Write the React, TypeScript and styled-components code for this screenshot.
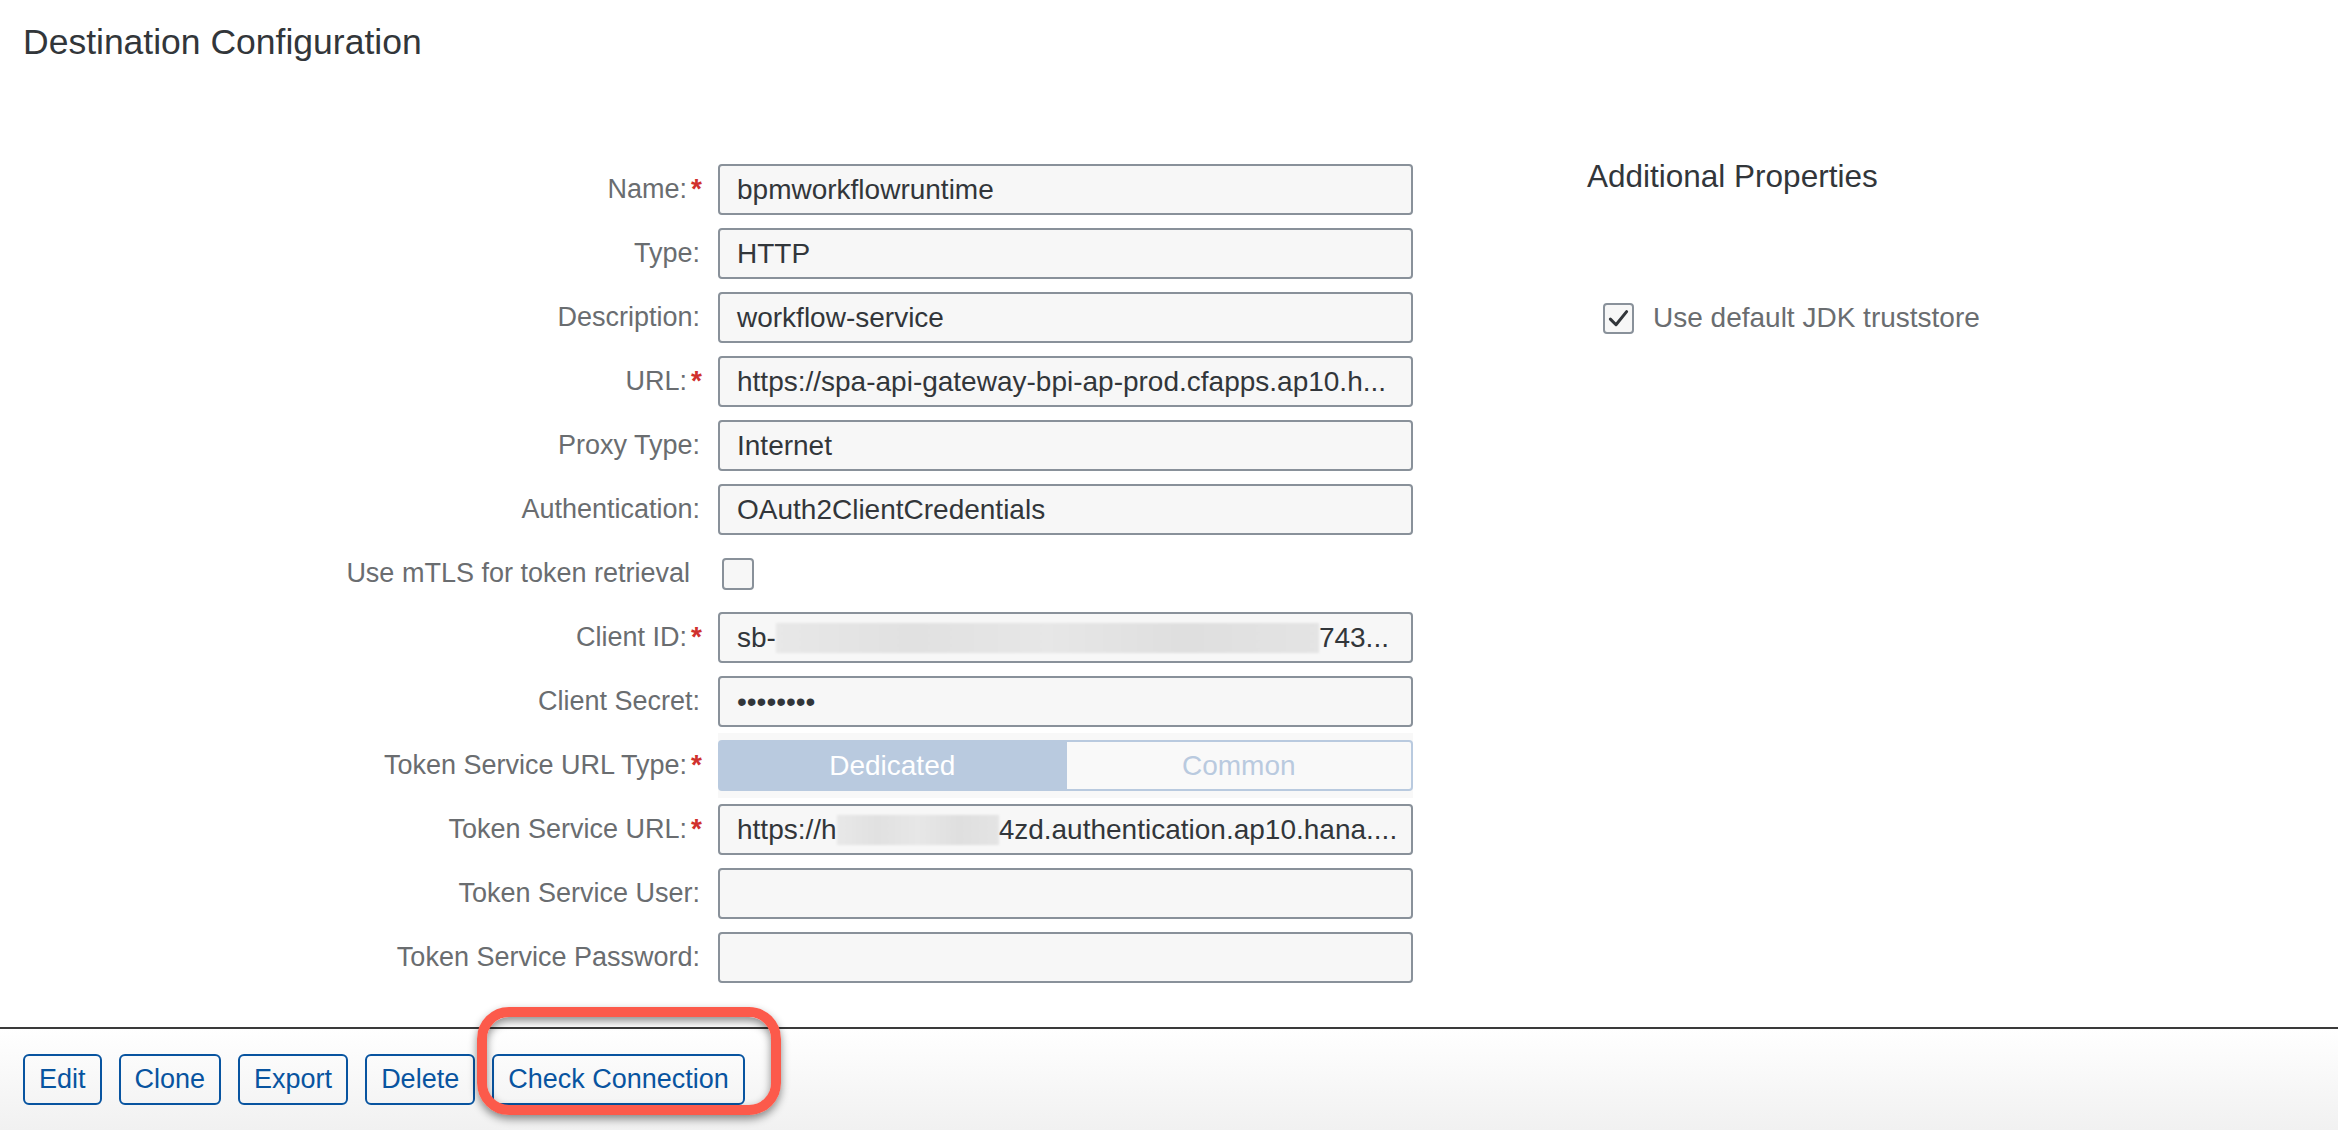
import React from "react";
import styled, { createGlobalStyle } from "styled-components";

const GlobalStyle = createGlobalStyle`
  html, body {
    margin: 0;
    padding: 0;
    background: #ffffff;
  }
  body {
    font-family: "Liberation Sans", Arial, sans-serif;
    color: #32363a;
  }
  * { box-sizing: border-box; }
`;

const Page = styled.div`
  display: flex;
  flex-direction: column;
  min-height: 100vh;
`;

const Header = styled.header`
  padding: 22px 0 0 23px;
`;

const Title = styled.h1`
  margin: 0;
  font-size: 35.5px;
  line-height: 40px;
  font-weight: 400;
  color: #32363a;
`;

const Main = styled.main`
  display: flex;
  align-items: flex-start;
  padding-top: 102px;
`;

const FormGrid = styled.div`
  display: grid;
  grid-template-columns: 702px 695px;
  grid-auto-rows: 51px;
  column-gap: 16px;
  row-gap: 13px;
`;

const Label = styled.label<{ $inset?: number }>`
  display: flex;
  align-items: center;
  justify-content: flex-end;
  padding-right: ${(p) => p.$inset ?? 2}px;
  font-size: 27px;
  color: #6a6d70;
  white-space: nowrap;
`;

const Required = styled.span`
  color: #d0312d;
  font-weight: 700;
  font-size: 28px;
  margin-left: 4px;
  margin-right: -2px;
  align-self: flex-start;
  padding-top: 9px;
`;

const Field = styled.div`
  display: flex;
  align-items: center;
  height: 51px;
  padding: 0 17px;
  border: 2px solid #89919a;
  border-radius: 4px;
  background: #f7f7f7;
  font-size: 28px;
  color: #32363a;
  white-space: nowrap;
  overflow: hidden;
`;

const Dots = styled.span`
  font-size: 28px;
`;

const Redacted = styled.span<{ $w: number }>`
  display: inline-block;
  flex: none;
  width: ${(p) => p.$w}px;
  height: 30px;
  background: linear-gradient(90deg, #e8e8e8 0%, #e1e1e1 25%, #e7e7e7 50%, #dfdfdf 75%, #e4e4e4 100%);
  filter: blur(0.8px);
`;

const CheckCell = styled.div`
  display: flex;
  align-items: center;
  padding-left: 4px;
`;

const Box = styled.span<{ $size: number }>`
  display: inline-flex;
  align-items: center;
  justify-content: center;
  width: ${(p) => p.$size}px;
  height: ${(p) => p.$size}px;
  border: 2px solid #89919a;
  border-radius: 4px;
  background: #f7f7f7;
`;

const SegmentWrap = styled.div`
  display: flex;
  margin: -7px 0;
  padding: 7px 0;
  background: #f8f8f8;
`;

const Segment = styled.div<{ $active?: boolean }>`
  flex: 1;
  display: flex;
  align-items: center;
  justify-content: center;
  font-size: 28px;
  border: 2px solid #b9cadf;
  background: ${(p) => (p.$active ? "#b9cadf" : "#f9f9f9")};
  color: ${(p) => (p.$active ? "#ffffff" : "#b9cadf")};
  border-radius: ${(p) => (p.$active ? "4px 0 0 4px" : "0 4px 4px 0")};
  ${(p) => (p.$active ? "" : "border-left: none;")}
`;

const Side = styled.aside`
  margin-left: 174px;
  margin-top: -6px;
`;

const SideTitle = styled.h2`
  margin: 0;
  font-size: 31.5px;
  line-height: 36px;
  font-weight: 400;
  color: #32363a;
`;

const CheckRow = styled.div`
  display: flex;
  align-items: center;
  gap: 19px;
  margin-top: 108px;
  padding-left: 16px;
  font-size: 28px;
  color: #6a6d70;
`;

const Footer = styled.footer`
  margin-top: auto;
  display: flex;
  gap: 17px;
  padding: 25px 23px;
  border-top: 2px solid #3a3a3a;
  background: linear-gradient(180deg, #ffffff 0%, #f1f1f1 100%);
`;

const Button = styled.button`
  height: 51px;
  padding: 0 14px;
  border: 2px solid #0854a0;
  border-radius: 6px;
  background: transparent;
  color: #0854a0;
  font-family: "Liberation Sans", Arial, sans-serif;
  font-size: 27px;
`;

const Highlight = styled.span`
  position: relative;
  display: inline-flex;

  &::after {
    content: "";
    position: absolute;
    left: -15px;
    right: -36px;
    top: -47px;
    bottom: -10px;
    border: 10px solid #fc5a4b;
    border-radius: 32px;
    box-shadow: 0 4px 9px rgba(0, 0, 0, 0.45), inset 0 4px 9px rgba(0, 0, 0, 0.45);
    pointer-events: none;
  }
`;

const Check = ({ size }: { size: number }) => (
  <svg width={size} height={size} viewBox="0 0 20 20">
    <path d="M3.5 10.5 L8 15 L16.5 4.5" fill="none" stroke="#32363a" strokeWidth="2.4" strokeLinecap="round" strokeLinejoin="round" />
  </svg>
);

type Row = { label: string; required?: boolean; value?: React.ReactNode };

const rows: Row[] = [
  { label: "Name:", required: true, value: "bpmworkflowruntime" },
  { label: "Type:", value: "HTTP" },
  { label: "Description:", value: "workflow-service" },
  { label: "URL:", required: true, value: "https://spa-api-gateway-bpi-ap-prod.cfapps.ap10.h..." },
  { label: "Proxy Type:", value: "Internet" },
  { label: "Authentication:", value: "OAuth2ClientCredentials" },
];

const rowsAfter: Row[] = [
  {
    label: "Client ID:",
    required: true,
    value: (
      <>
        sb-<Redacted $w={543} />743...
      </>
    ),
  },
  { label: "Client Secret:", value: <Dots>••••••••</Dots> },
];

const rowsEnd: Row[] = [
  {
    label: "Token Service URL:",
    required: true,
    value: (
      <>
        https://h<Redacted $w={162} />4zd.authentication.ap10.hana....
      </>
    ),
  },
  { label: "Token Service User:" },
  { label: "Token Service Password:" },
];

const FieldRow = ({ label, required, value }: Row) => (
  <>
    <Label>
      {label}
      {required && <Required>*</Required>}
    </Label>
    <Field>{value}</Field>
  </>
);

export default function App() {
  return (
    <>
      <GlobalStyle />
      <Page>
        <Header>
          <Title>Destination Configuration</Title>
        </Header>
        <Main>
          <FormGrid>
            {rows.map((r) => (
              <FieldRow key={r.label} {...r} />
            ))}
            <Label $inset={12}>Use mTLS for token retrieval</Label>
            <CheckCell>
              <Box $size={32} />
            </CheckCell>
            {rowsAfter.map((r) => (
              <FieldRow key={r.label} {...r} />
            ))}
            <Label>
              Token Service URL Type:<Required>*</Required>
            </Label>
            <SegmentWrap>
              <Segment $active>Dedicated</Segment>
              <Segment>Common</Segment>
            </SegmentWrap>
            {rowsEnd.map((r) => (
              <FieldRow key={r.label} {...r} />
            ))}
          </FormGrid>
          <Side>
            <SideTitle>Additional Properties</SideTitle>
            <CheckRow>
              <Box $size={31}>
                <Check size={25} />
              </Box>
              Use default JDK truststore
            </CheckRow>
          </Side>
        </Main>
        <Footer>
          <Button>Edit</Button>
          <Button>Clone</Button>
          <Button>Export</Button>
          <Button>Delete</Button>
          <Highlight>
            <Button>Check Connection</Button>
          </Highlight>
        </Footer>
      </Page>
    </>
  );
}
